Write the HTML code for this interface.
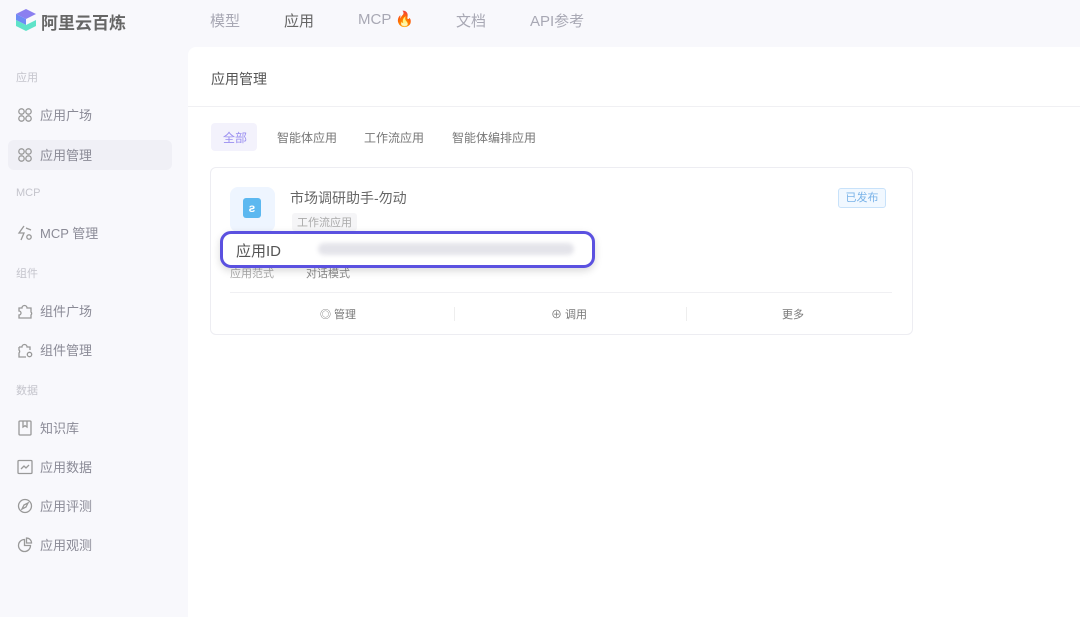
<!DOCTYPE html>
<html><head><meta charset="utf-8"><style>
*{margin:0;padding:0;box-sizing:border-box}
body{width:1080px;height:608px;background:#f8f8fc;font-family:"Liberation Sans","Noto Sans CJK SC",sans-serif;position:relative;overflow:hidden;color:#555}
.abs{position:absolute;white-space:nowrap}
.nav{font-size:15px;color:#a8a8b4;top:10px}
.sec{font-size:11px;color:#c4c4cc;left:16px}
.item{font-size:13px;color:#8a8a96;left:40px}
.ic{position:absolute;left:17px;width:16px;height:16px}
.panel{position:absolute;left:188px;top:47px;width:900px;height:570px;background:#fff;border-radius:8px 0 0 0}
</style></head><body>
<svg class="abs" style="left:15px;top:8px" width="22" height="24" viewBox="0 0 22 24">
<path d="M11 1 L21 6 L11 11 L1 6Z" fill="#8b7ff0"/><path d="M1 6 L11 11 L11 17 L1 12Z" fill="#6d8cf5"/><path d="M1 12 L11 17 L21 12 L21 18 L11 23 L1 18Z" fill="#5fe3c9"/></svg>
<div class="abs" style="left:41px;top:9px;font-size:17px;font-weight:bold;color:#666">阿里云百炼</div>
<div class="abs nav" style="left:210px">模型</div>
<div class="abs nav" style="left:284px;color:#666">应用</div>
<div class="abs nav" style="left:358px">MCP <span style="color:#f2a46a">🔥</span></div>
<div class="abs nav" style="left:456px">文档</div>
<div class="abs nav" style="left:530px">API参考</div>

<div class="abs sec" style="top:69px">应用</div>
<div style="position:absolute;left:8px;top:140px;width:164px;height:30px;background:#f0f0f6;border-radius:6px"></div>
<svg class="ic" style="top:107px" viewBox="0 0 16 16" fill="none" stroke="#999" stroke-width="1.3"><circle cx="4.5" cy="4.5" r="2.7"/><circle cx="11.5" cy="4.5" r="2.7"/><circle cx="4.5" cy="11.5" r="2.7"/><circle cx="11.5" cy="11.5" r="2.7"/></svg>
<div class="abs item" style="top:105px">应用广场</div>
<svg class="ic" style="top:147px" viewBox="0 0 16 16" fill="none" stroke="#999" stroke-width="1.3"><circle cx="4.5" cy="4.5" r="2.7"/><circle cx="11.5" cy="4.5" r="2.7"/><circle cx="4.5" cy="11.5" r="2.7"/><circle cx="11.5" cy="11.5" r="2.7"/></svg>
<div class="abs item" style="top:145px">应用管理</div>
<div class="abs sec" style="top:187px">MCP</div>
<svg class="ic" style="top:225px" viewBox="0 0 16 16" fill="none" stroke="#999" stroke-width="1.3"><path d="M7 1 L2 8 L7 8 L4 15"/><path d="M9 3 L14 5"/><circle cx="12" cy="12" r="2.2"/></svg>
<div class="abs item" style="top:223px">MCP 管理</div>
<div class="abs sec" style="top:265px">组件</div>
<svg class="ic" style="top:303px" viewBox="0 0 16 16" fill="none" stroke="#999" stroke-width="1.3"><path d="M2 5h3a2.5 2.5 0 015 0h4v4a2 2 0 010 3v3H2v-3a2 2 0 000-4z"/></svg>
<div class="abs item" style="top:301px">组件广场</div>
<svg class="ic" style="top:342px" viewBox="0 0 16 16" fill="none" stroke="#999" stroke-width="1.3"><path d="M2 5h3a2.5 2.5 0 015 0h3v3M2 5v3a2 2 0 010 3v4h7"/><circle cx="12.5" cy="12.5" r="2.2"/></svg>
<div class="abs item" style="top:340px">组件管理</div>
<div class="abs sec" style="top:382px">数据</div>
<svg class="ic" style="top:420px" viewBox="0 0 16 16" fill="none" stroke="#999" stroke-width="1.3"><rect x="2" y="1" width="12" height="14" rx="1"/><path d="M6 1v6l2-1.3 2 1.3V1"/></svg>
<div class="abs item" style="top:418px">知识库</div>
<svg class="ic" style="top:459px" viewBox="0 0 16 16" fill="none" stroke="#999" stroke-width="1.3"><rect x="1" y="1.5" width="14" height="13" rx="1"/><path d="M4 10l3-3 2 2 3-3"/></svg>
<div class="abs item" style="top:457px">应用数据</div>
<svg class="ic" style="top:498px" viewBox="0 0 16 16" fill="none" stroke="#999" stroke-width="1.3"><circle cx="8" cy="8" r="6.5"/><path d="M11 5L9 9 5 11 7 7z"/></svg>
<div class="abs item" style="top:496px">应用评测</div>
<svg class="ic" style="top:537px" viewBox="0 0 16 16" fill="none" stroke="#999" stroke-width="1.3"><path d="M7.5 2.5a6 6 0 106 6H7.5z"/><path d="M9.5 1a5 5 0 015 5h-5z"/></svg>
<div class="abs item" style="top:535px">应用观测</div>

<div class="panel"></div>
<div class="abs" style="left:188px;top:106px;width:892px;height:1px;background:#f0f0f3"></div>
<div class="abs" style="left:211px;top:69px;font-size:14px;color:#555">应用管理</div>
<div class="abs" style="left:211px;top:123px;width:46px;height:28px;background:#f3f2fc;border-radius:4px"></div>
<div class="abs" style="left:223px;top:129px;font-size:12px;color:#9a8ff0">全部</div>
<div class="abs" style="left:277px;top:129px;font-size:12px;color:#777">智能体应用</div>
<div class="abs" style="left:364px;top:129px;font-size:12px;color:#777">工作流应用</div>
<div class="abs" style="left:452px;top:129px;font-size:12px;color:#777">智能体编排应用</div>

<div class="abs" style="left:210px;top:167px;width:703px;height:168px;border:1px solid #ededf2;border-radius:6px;background:#fff"></div>
<div class="abs" style="left:230px;top:187px;width:45px;height:45px;background:#eef5ff;border-radius:8px"></div>
<div class="abs" style="left:243px;top:198px;width:18px;height:20px;background:#5cb8f0;border-radius:3px;color:#fff;font-size:12px;text-align:center;line-height:20px;font-weight:bold">ƨ</div>
<div class="abs" style="left:290px;top:188px;font-size:14px;color:#666">市场调研助手-勿动</div>
<div class="abs" style="left:292px;top:213px;padding:1px 5px;background:#f5f5f7;border-radius:3px;font-size:11px;color:#aaa">工作流应用</div>
<div class="abs" style="left:838px;top:188px;width:48px;height:20px;border:1px solid #c8e2fa;background:#f1f8ff;border-radius:3px;font-size:11px;color:#7ab3e8;text-align:center;line-height:18px">已发布</div>
<div class="abs" style="left:230px;top:265px;font-size:11px;color:#aaa">应用范式</div>
<div class="abs" style="left:306px;top:265px;font-size:11px;color:#888">对话模式</div>
<div class="abs" style="left:230px;top:292px;width:662px;height:1px;background:#f0f0f3"></div>
<div class="abs" style="left:454px;top:307px;width:1px;height:14px;background:#eee"></div>
<div class="abs" style="left:686px;top:307px;width:1px;height:14px;background:#eee"></div>
<div class="abs" style="left:320px;top:306px;font-size:11px;color:#777">◎ 管理</div>
<div class="abs" style="left:551px;top:306px;font-size:11px;color:#777">⊕ 调用</div>
<div class="abs" style="left:782px;top:306px;font-size:11px;color:#777">更多</div>

<div class="abs" style="left:220px;top:231px;width:375px;height:37px;border:3px solid #5b51e0;border-radius:11px;background:#fff;box-shadow:0 3px 8px rgba(0,0,0,.15)"></div>
<div class="abs" style="left:236px;top:240px;font-size:15px;color:#555">应用ID</div>
<div class="abs" style="left:318px;top:243px;width:256px;height:12px;background:#e4e4ea;border-radius:6px;filter:blur(2px)"></div>
</body></html>
